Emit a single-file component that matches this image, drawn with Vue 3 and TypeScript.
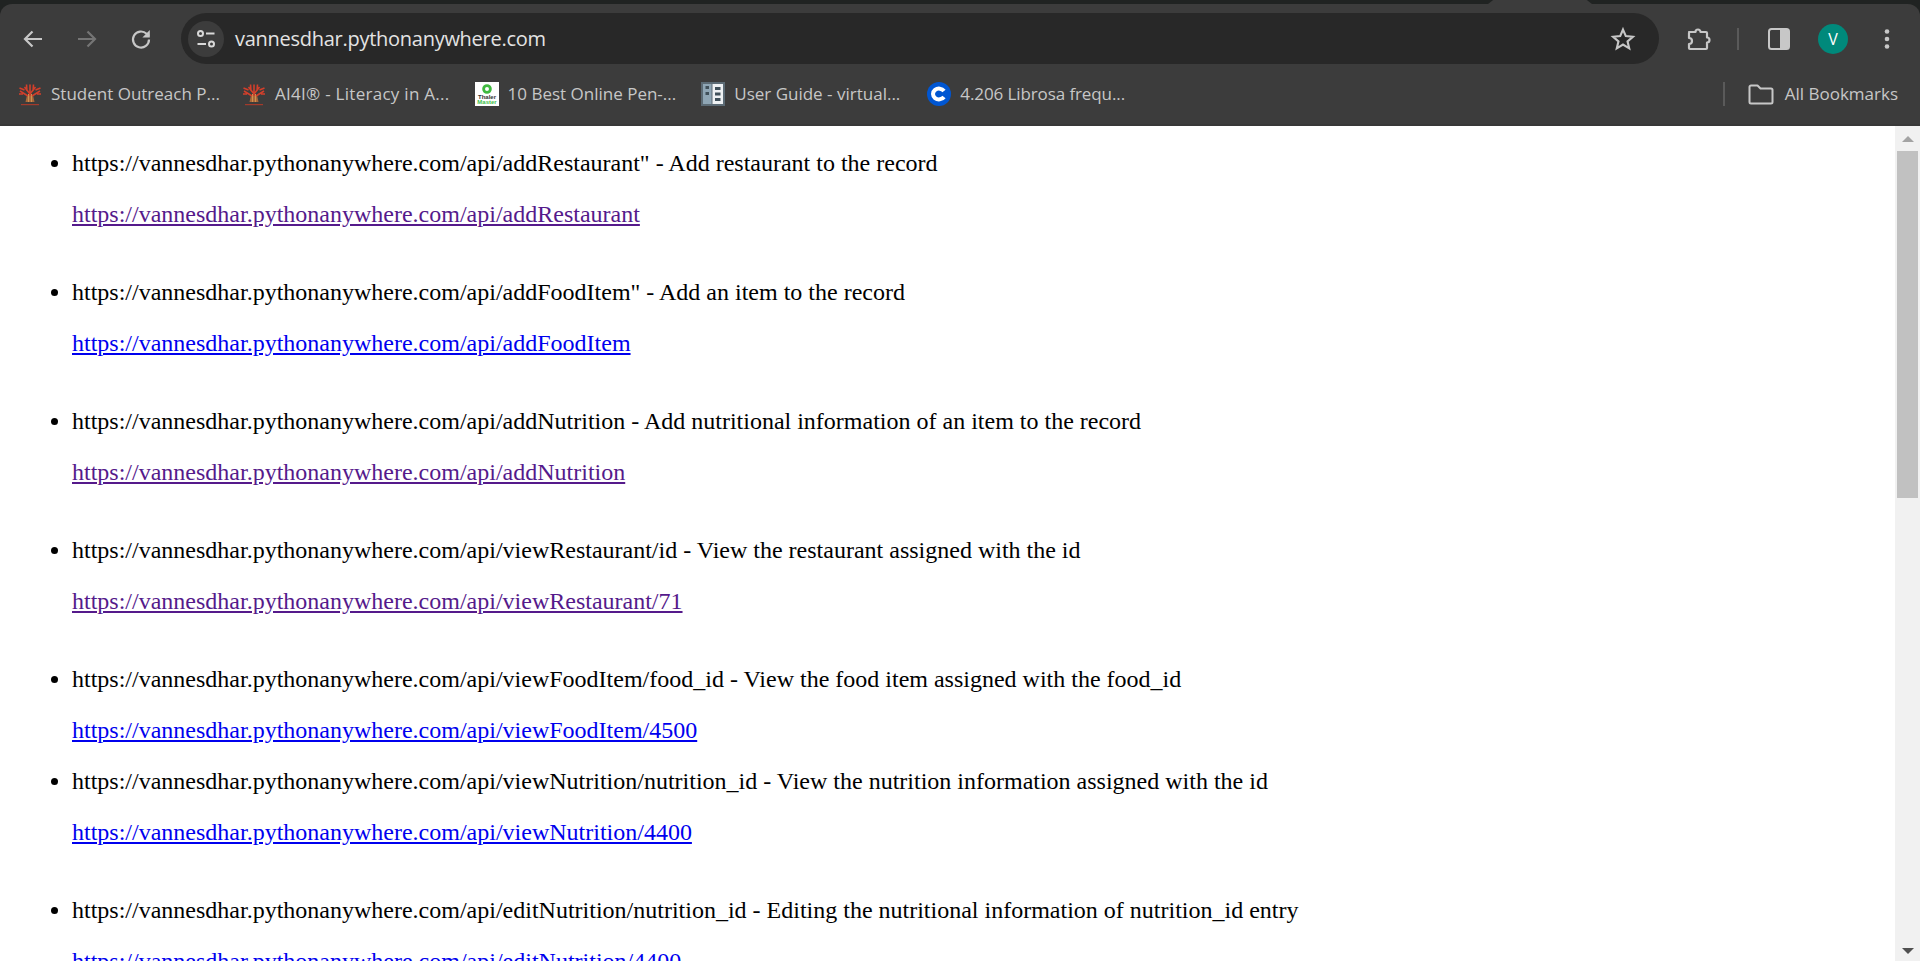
<script setup lang="ts">
interface Bookmark { label: string; icon: string; wide?: boolean }
interface Row { text: string; href: string; visited?: boolean; spacer?: boolean }

const bookmarks: Bookmark[] = [
  { label: 'Student Outreach P...', icon: 'tree' },
  { label: 'AI4I® - Literacy in A...', icon: 'tree', wide: true },
  { label: '10 Best Online Pen-...', icon: 'thaler' },
  { label: 'User Guide - virtual...', icon: 'guide' },
  { label: '4.206 Librosa frequ...', icon: 'coursera' },
]

const base = 'https://vannesdhar.pythonanywhere.com/api/'
const rows: Row[] = [
  { text: `${base}addRestaurant" - Add restaurant to the record`, href: `${base}addRestaurant`, visited: true, spacer: true },
  { text: `${base}addFoodItem" - Add an item to the record`, href: `${base}addFoodItem`, spacer: true },
  { text: `${base}addNutrition - Add nutritional information of an item to the record`, href: `${base}addNutrition`, visited: true, spacer: true },
  { text: `${base}viewRestaurant/id - View the restaurant assigned with the id`, href: `${base}viewRestaurant/71`, visited: true, spacer: true },
  { text: `${base}viewFoodItem/food_id - View the food item assigned with the food_id`, href: `${base}viewFoodItem/4500` },
  { text: `${base}viewNutrition/nutrition_id - View the nutrition information assigned with the id`, href: `${base}viewNutrition/4400`, spacer: true },
  { text: `${base}editNutrition/nutrition_id - Editing the nutritional information of nutrition_id entry`, href: `${base}editNutrition/4400`, spacer: true },
]
</script>

<template>
  <div class="window">
    <header class="chrome">
      <span class="tab-edge"></span>
      <div class="toolbar">
        <button class="tool">
          <svg width="24" height="24" viewBox="0 0 24 24"><path d="M21 12H5M11.5 4.5 4 12l7.5 7.5" fill="none" stroke="#c7c7c7" stroke-width="2.2"/></svg>
        </button>
        <button class="tool">
          <svg width="24" height="24" viewBox="0 0 24 24"><path d="M3 12h16M12.5 4.5 20 12l-7.5 7.5" fill="none" stroke="#757575" stroke-width="2.2"/></svg>
        </button>
        <button class="tool">
          <svg width="24" height="24" viewBox="0 0 24 24"><path d="M20 12.5a8 8 0 1 1-2.4-5.7L20 9" fill="none" stroke="#c7c7c7" stroke-width="2.2"/><path d="M20.8 3v7.6h-7.4z" fill="#c7c7c7"/></svg>
        </button>
        <div class="omnibox">
          <span class="site-btn">
            <svg width="22" height="22" viewBox="0 0 22 22" fill="none" stroke="#d8d8d8" stroke-width="2"><circle cx="5.5" cy="5.5" r="2.5"/><path d="M11 5.5h8.5M2.5 16H11"/><circle cx="16.5" cy="16" r="2.5"/></svg>
          </span>
          <span class="url">vannesdhar.pythonanywhere.com</span>
          <svg class="star" width="26" height="26" viewBox="0 0 24 24"><path d="M12 3.3l2.6 6 6.5.6-4.9 4.3 1.5 6.4-5.7-3.4-5.7 3.4 1.5-6.4-4.9-4.3 6.5-.6z" fill="none" stroke="#c7c7c7" stroke-width="2" stroke-linejoin="miter"/></svg>
        </div>
        <div class="actions">
          <svg width="26" height="26" viewBox="0 0 26 26"><path d="M4 6h6.5a2.5 2.5 0 0 1 5 0H21a1 1 0 0 1 1 1v4.5a2.5 2.5 0 0 1 0 5V22a1 1 0 0 1-1 1H5a1 1 0 0 1-1-1v-4a3 3 0 0 0 0-6V7a1 1 0 0 1 1-1z" fill="none" stroke="#c7c7c7" stroke-width="2.2" stroke-linejoin="round"/></svg>
          <span class="vsep"></span>
          <svg width="22" height="22" viewBox="0 0 22 22"><rect x="1" y="1" width="20" height="20" rx="2.5" fill="none" stroke="#c7c7c7" stroke-width="2"/><path d="M12 1h7a2 2 0 0 1 2 2v16a2 2 0 0 1-2 2h-7z" fill="#c7c7c7"/></svg>
          <span class="avatar">V</span>
          <svg width="8" height="24" viewBox="0 0 8 24" fill="#c7c7c7"><circle cx="4" cy="4.5" r="2.3"/><circle cx="4" cy="12" r="2.3"/><circle cx="4" cy="19.5" r="2.3"/></svg>
        </div>
      </div>
      <nav class="bookmarks">
        <a v-for="b in bookmarks" :key="b.label" class="bookmark">
          <svg v-if="b.icon === 'tree'" class="fav" viewBox="0 0 24 24">
            <path d="M9 13h6l1.500 7h-9z" fill="#a8683a"/>
            <path d="M10.500 20V12M13.500 20V12" stroke="#d0914f" stroke-width="1" fill="none"/>
            <path d="M12 14V2.500M12 12 6.500 5M12 12l5.500-7M10 14 2 9M14 14l8-5M9 9 8.500 2.500M15 9l.5-6.500M6.500 8 1.500 6M17.500 8l5-2M5 12H1M19 12h4" stroke="#d23f2b" stroke-width="1.6" fill="none"/>
            <rect x="3" y="22" width="18" height="1.2" fill="#a33a2b"/>
          </svg>
          <svg v-else-if="b.icon === 'thaler'" class="fav" viewBox="0 0 24 24">
            <rect width="24" height="24" fill="#fff"/>
            <circle cx="12" cy="7" r="3.4" fill="none" stroke="#3fb93f" stroke-width="2.8"/>
            <text x="12" y="17" class="fav-text" fill="#333">Thaler</text>
            <text x="12" y="22" class="fav-text" fill="#3fc04a">Master</text>
          </svg>
          <svg v-else-if="b.icon === 'guide'" class="fav" viewBox="0 0 24 24">
            <rect width="24" height="24" fill="#5c6b75"/>
            <rect x="2" y="2" width="8.500" height="20" fill="#8fa6b5"/>
            <rect x="11.500" y="2" width="10.500" height="20" fill="#eef1f3"/>
            <rect x="4.500" y="4" width="3.500" height="3" fill="#40505a"/><rect x="4.500" y="10" width="3.500" height="3" fill="#40505a"/>
            <rect x="14" y="5" width="5.500" height="3" fill="#40505a"/><rect x="14" y="10.500" width="5.500" height="3" fill="#40505a"/><rect x="14" y="16" width="5.500" height="3" fill="#40505a"/>
          </svg>
          <svg v-else class="fav" viewBox="0 0 24 24">
            <circle cx="12" cy="12" r="12" fill="#0056d2"/>
            <path d="M17 9a6 5.400 0 1 0 0 6" fill="none" stroke="#fff" stroke-width="4"/>
          </svg>
          <span :class="{ wide: b.wide, tight: b.icon === 'coursera' }">{{ b.label }}</span>
        </a>
        <span class="bm-sep"></span>
        <a class="bookmark all">
          <svg width="26" height="26" viewBox="0 0 26 26"><path d="M1.500 6A1.500 1.500 0 0 1 3 4.500h6.500l3 3H23a1.500 1.500 0 0 1 1.500 1.500v12a1.500 1.500 0 0 1-1.500 1.500H3A1.500 1.500 0 0 1 1.500 21z" fill="none" stroke="#c7c7c7" stroke-width="2" stroke-linejoin="round"/></svg>
          <span>All Bookmarks</span>
        </a>
      </nav>
    </header>

    <div class="viewport">
      <main class="page">
        <ul class="list">
          <li v-for="r in rows" :key="r.text">
            <p>{{ r.text }}</p>
            <p><a :href="r.href" :class="{ visited: r.visited }" @click.prevent>{{ r.href }}</a></p>
            <br v-if="r.spacer" />
          </li>
        </ul>
      </main>
      <aside class="scrollbar">
        <span class="arrow up"></span>
        <span class="thumb"></span>
        <span class="arrow down"></span>
      </aside>
    </div>
  </div>
</template>

<style>
html, body { margin: 0; height: 100%; overflow: hidden; background: #fff; }
</style>

<style scoped>
.window { height: 961px; display: flex; flex-direction: column; overflow: hidden; }
.chrome { flex: none; height: 126px; box-sizing: border-box; background: #202322; padding-top: 4px; position: relative; }
.tab-edge {
  position: absolute; left: 1488px; top: 0; width: 104px; height: 4px; background: #3c3c3c;
  clip-path: polygon(5% 0, 95% 0, 100% 100%, 0 100%);
}
.toolbar {
  height: 60px; background: #3c3c3c; border-radius: 12px 12px 0 0;
  display: flex; align-items: center; box-sizing: border-box; padding: 9px 0 0 21px;
}
.tool { width: 24px; height: 24px; margin-right: 30px; padding: 0; border: 0; background: none; display: flex; }
.tool:nth-child(3) { margin-right: 29px; }
.omnibox {
  width: 1478px; height: 51px; margin-left: -1px; background: #282828; border-radius: 26px;
  display: flex; align-items: center; box-sizing: border-box; padding: 0 16px 0 7px;
}
.site-btn { width: 36px; height: 36px; border-radius: 50%; background: #3c3c3c; display: flex; align-items: center; justify-content: center; }
.url { margin-left: 11px; font: 20px "Open Sans", "Noto Sans", sans-serif; color: #e3e3e3; flex: 1; letter-spacing: -0.27px; }
.star { margin-right: 7px; }
.actions { flex: 1; display: flex; align-items: center; padding-left: 26px; }
.vsep { width: 2px; height: 22px; background: #5a5a5a; margin: 0 29px 0 26px; }
.avatar {
  width: 30px; height: 30px; border-radius: 50%; background: #00897b; color: #fff;
  font: 16px "Open Sans", sans-serif; display: flex; align-items: center; justify-content: center; margin: 0 0 0 28px;
}
.actions svg:last-child { margin-left: 35px; }
.bookmarks {
  height: 62px; background: #3c3c3c; display: flex; align-items: center; box-sizing: border-box;
  padding: 0 22px 1px 18px; border-bottom: 2px solid #383838;
}
.bookmark { display: flex; align-items: center; gap: 9px; margin-right: 25px; font: 17px "Open Sans", "Noto Sans", sans-serif; color: #c7c7c7; white-space: nowrap; }
.bookmark:first-child { margin-right: 22px; }
.bookmark:nth-child(4) { margin-right: 27px; }
.wide { letter-spacing: 0.28px; }
.tight { letter-spacing: -0.1px; }
.fav { width: 24px; height: 24px; flex: none; }
.fav-text { font: bold 6px "Liberation Sans", sans-serif; text-anchor: middle; }
.bm-sep { width: 2px; height: 24px; background: #5a5a5a; margin-left: auto; margin-right: 23px; }
.bookmark.all { margin-right: 0; gap: 11px; }

.viewport { flex: 1; min-height: 0; display: flex; background: #fff; }
.page { flex: 1; min-width: 0; overflow: hidden; }
.list { margin: 0; padding: 24px 0 0 72px; font: 24px/27px "Liberation Serif", serif; color: #000; }
.list p { margin: 0 0 24px; }
.list a { color: #0000ee; text-decoration: underline; }
.list a.visited { color: #551a8b; }
.list li br { display: block; height: 27px; content: ""; }

.scrollbar { width: 25px; flex: none; background: #f1f1f1; display: flex; flex-direction: column; align-items: center; position: relative; }
.thumb { width: 21px; height: 347px; background: #c1c1c1; margin-top: 0; }
.arrow { width: 0; height: 0; border-left: 6px solid transparent; border-right: 6px solid transparent; }
.arrow.up { border-bottom: 6px solid #a3a3a3; margin: 10px 0 9px; }
.arrow.down { border-top: 6px solid #505050; margin-top: auto; margin-bottom: 7px; }
</style>
